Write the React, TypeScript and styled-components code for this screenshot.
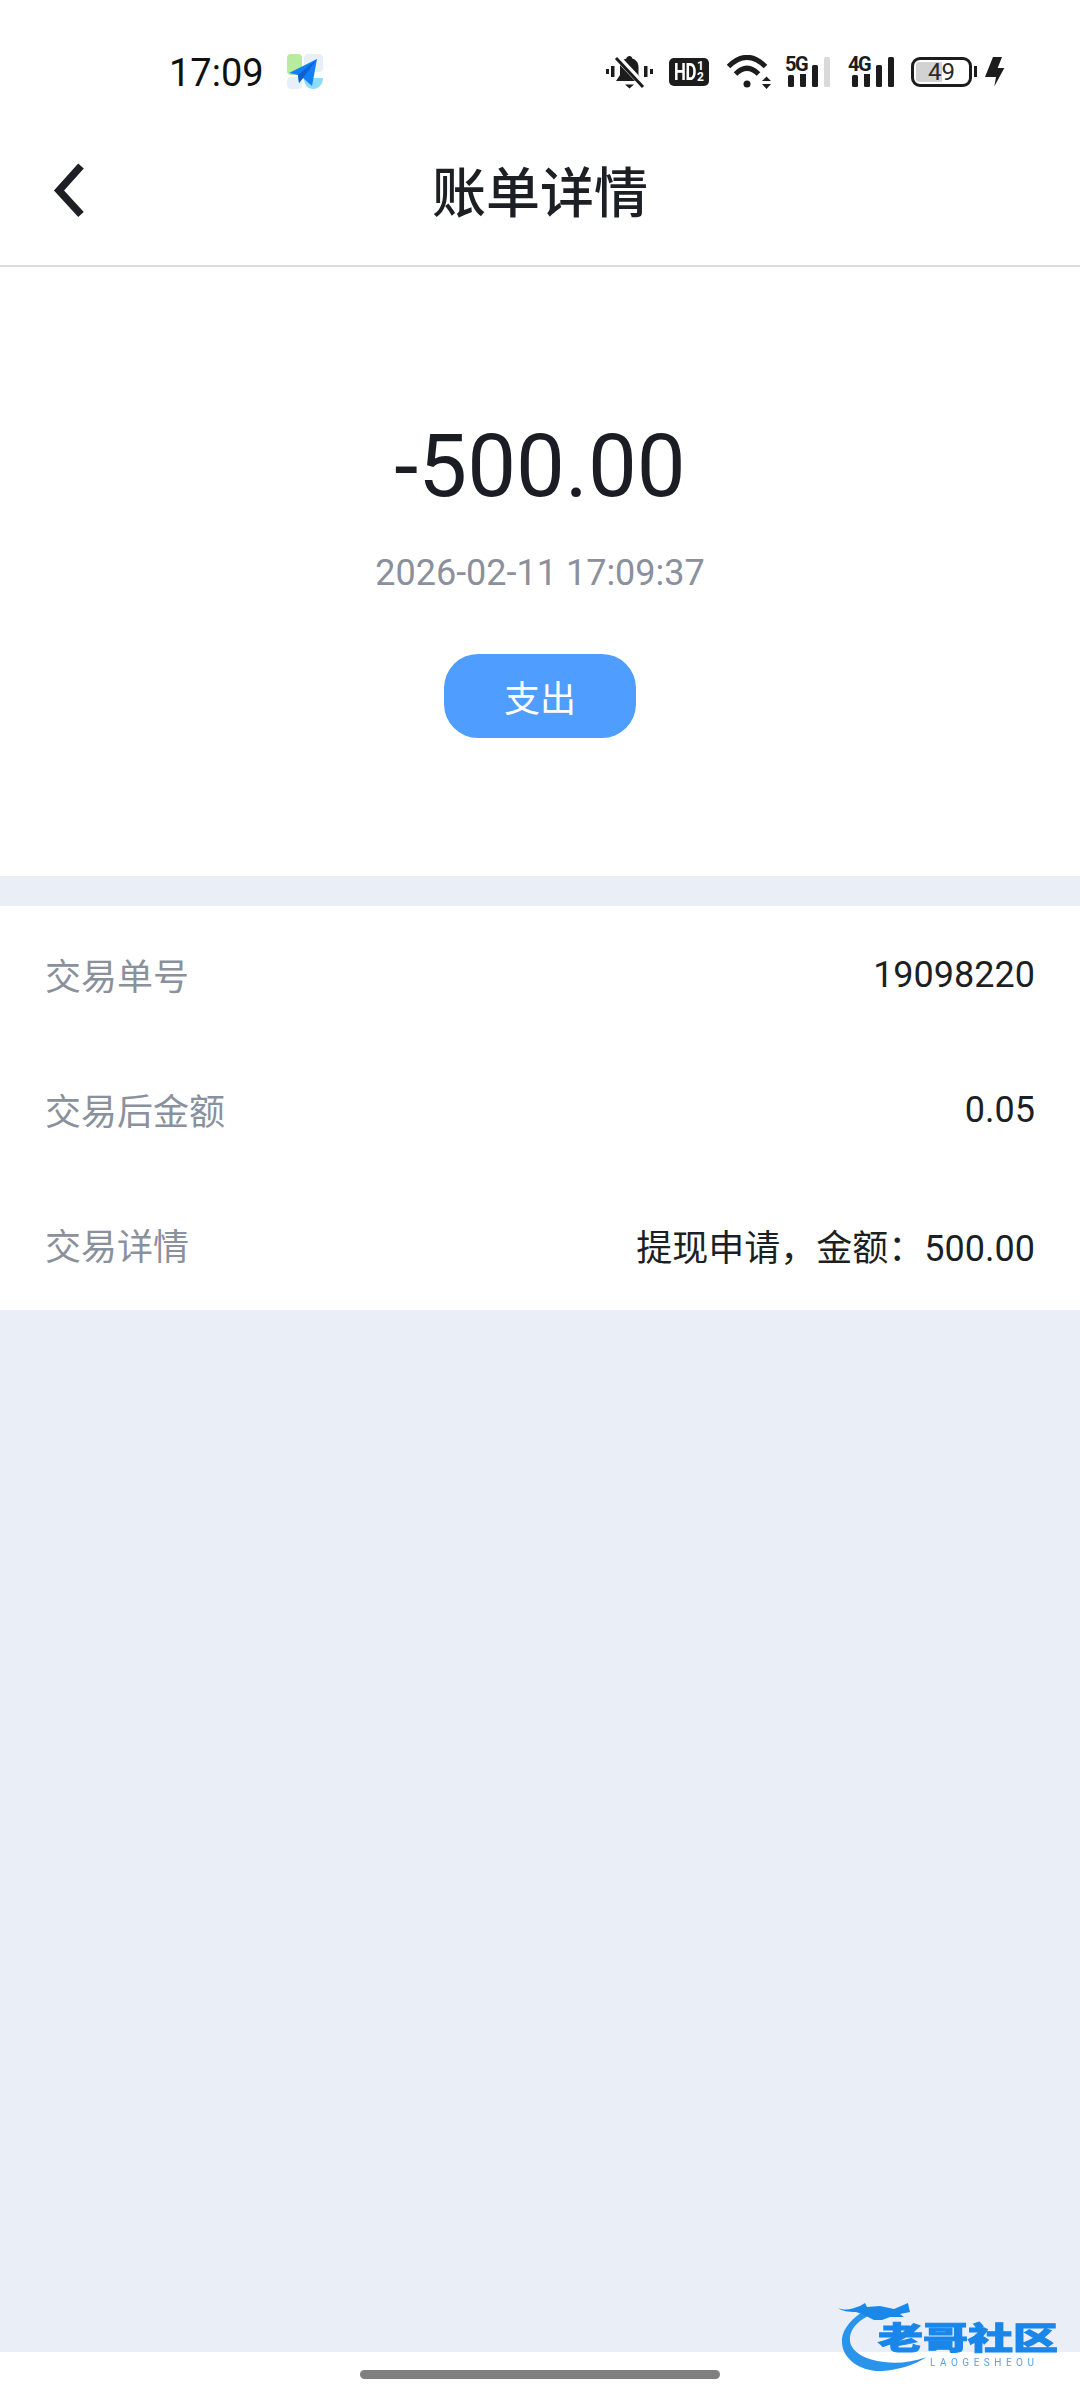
import React from "react";
import styled, { createGlobalStyle } from "styled-components";

const GlobalStyle = createGlobalStyle`
    html, body {
        margin: 0;
        padding: 0;
        background: #ffffff;
    }
    * {
        box-sizing: border-box;
    }
`;

const FONT = `Roboto, "Noto Sans CJK SC", sans-serif`;

const details = [
    { label: "交易单号", value: "19098220" },
    { label: "交易后金额", value: "0.05" },
    { label: "交易详情", value: "提现申请，金额：500.00" },
];

const MuteIcon = () => (
    <svg width="47" height="34" viewBox="0 0 47 34">
        <path d="M0 14h3v5H0zM5 11h3.500v11H5zM38 11h3.500v11H38zM44 14h3v5h-3z" fill="#1c1c1c" />
        <path d="M23.500 1c1.600 0 2.600 1 2.800 2.400 4 1.200 6.200 4.400 6.200 8.600v8l4 6H10l4-6v-8c0-4.200 2.400-7.400 6.400-8.600C20.700 2 21.900 1 23.500 1z" fill="#1c1c1c" />
        <path d="M19 29.500h9l-4.500 4z" fill="#1c1c1c" />
        <path d="M10 1l29 31" stroke="#ffffff" strokeWidth="6.500" />
        <path d="M10 3l27 29" stroke="#1c1c1c" strokeWidth="3" />
    </svg>
);

const WifiIcon = () => (
    <svg width="45" height="34" viewBox="0 0 45 34">
        <path d="M1.500 11.500Q20-7 38.500 11.500" fill="none" stroke="#1c1c1c" strokeWidth="5" />
        <path d="M8.500 19Q20 7.500 31.500 19" fill="none" stroke="#1c1c1c" strokeWidth="5" />
        <circle cx="20" cy="29" r="3.500" fill="#1c1c1c" />
        <path d="M35 26l4.500-4.500 4.500 4.500zM35 29h9l-4.500 5z" fill="#1c1c1c" />
    </svg>
);

const SignalIcon = ({ offset, dim }: { offset: number; dim?: boolean }) => (
    <svg width="46" height="30" viewBox="0 0 46 30">
        <rect x={offset} y="18" width="6" height="12" rx="1.500" fill="#1c1c1c" />
        <rect x={offset + 12} y="15" width="6" height="15" rx="1.500" fill="#1c1c1c" />
        <rect x={offset + 24} y="8" width="6" height="22" rx="1.500" fill="#1c1c1c" />
        <rect x={offset + 36} y="0" width="6" height="30" rx="1.500" fill={dim ? "#d9d9d9" : "#1c1c1c"} />
    </svg>
);

const BoltIcon = () => (
    <svg width="20" height="31" viewBox="0 0 20 31">
        <path d="M8 1h9l-4.300 11h6.600L9.300 30.500 11 21H0z" fill="#1c1c1c" />
    </svg>
);

const AppIcon = () => (
    <svg width="38" height="37" viewBox="0 0 38 37">
        <rect x="1" y="1" width="15" height="21" rx="4" fill="#b9eb9e" />
        <rect x="18" y="1" width="19" height="18" rx="4" fill="#e8eff8" />
        <rect x="1" y="24" width="15" height="12" rx="4" fill="#e8eff8" />
        <path d="M18 25h19c0 6-4 11-10 11-5 0-9-4-9-11z" fill="#8edcfb" />
        <path d="M3 20L31 6l-5 27-9-8-4 5-1-8z" fill="#1080f4" />
        <path d="M12 22L31 6 17 25l-4 5z" fill="#0b62cf" />
    </svg>
);

const BackIcon = () => (
    <svg width="34" height="58" viewBox="0 0 34 58">
        <path d="M31 4L9 28.500l22 24" fill="none" stroke="#1c1f24" strokeWidth="7.500" />
    </svg>
);

const DragonIcon = () => (
    <svg width="100" height="74" viewBox="0 0 100 74">
        <path d="M24 12C10 22 3 32 4 43c1 17 20 29 40 28 16-1 32-6 45-14-15 5-29 7-43 5-18-2-33-10-34-21-1-10 6-19 18-25z" fill="#2a93ea" />
        <path d="M0 8c8 3 14 1 22-2l5-3 2 4 13-1 14 3 14-6 1 5 1 4-10 2 4 3H52l-8 3h-8l-6-3-6-3-6-2C10 12 4 11 0 8z" fill="#1a88ea" />
    </svg>
);

const App = () => {
    return (
        <Page>
            <GlobalStyle />
            <StatusBar>
                <Clock>17:09</Clock>
                <AppIconWrap><AppIcon /></AppIconWrap>
                <StatusIcons>
                    <MuteIcon />
                    <HdBadge>
                        <HdText>HD</HdText>
                        <HdSim><span>1</span><span>2</span></HdSim>
                    </HdBadge>
                    <WifiIcon />
                    <Signal>
                        <SignalLabel>5G</SignalLabel>
                        <SignalIcon offset={3} dim />
                    </Signal>
                    <Signal>
                        <SignalLabel>4G</SignalLabel>
                        <SignalIcon offset={4} />
                    </Signal>
                    <Battery>
                        <BatteryFill />
                        <BatteryText>49</BatteryText>
                    </Battery>
                    <BatteryTip />
                    <BoltIcon />
                </StatusIcons>
            </StatusBar>
            <NavBar>
                <BackButton><BackIcon /></BackButton>
                <NavTitle>账单详情</NavTitle>
            </NavBar>
            <Hero>
                <Amount>-500.00</Amount>
                <DateText>2026-02-11 17:09:37</DateText>
                <TypeTag>支出</TypeTag>
            </Hero>
            <DetailList>
                {details.map(item => (
                    <DetailRow key={item.label}>
                        <DetailLabel>{item.label}</DetailLabel>
                        <DetailValue>{item.value}</DetailValue>
                    </DetailRow>
                ))}
            </DetailList>
            <Filler />
            <HomeArea>
                <HomeHandle />
            </HomeArea>
            <Watermark>
                <DragonIcon />
                <WatermarkName>老哥社区</WatermarkName>
                <WatermarkSub>LAOGESHEOU</WatermarkSub>
            </Watermark>
        </Page>
    );
};

const Page = styled.div`
    position: relative;
    display: flex;
    flex-direction: column;
    width: 1080px;
    height: 2400px;
    overflow: hidden;
    background-color: #e9eef7;
    font-family: ${FONT};
`;
const StatusBar = styled.div`
    display: flex;
    align-items: center;
    height: 143px;
    padding: 0 75px 0 169px;
    background-color: #ffffff;
`;
const Clock = styled.div`
    font-size: 38px;
    color: #111111;
    padding-top: 2px;
`;
const AppIconWrap = styled.div`
    display: flex;
    margin-left: 22px;
`;
const StatusIcons = styled.div`
    display: flex;
    align-items: center;
    margin-left: auto;
`;
const HdBadge = styled.div`
    display: flex;
    align-items: center;
    width: 40px;
    height: 28px;
    margin: 0 18px 0 16px;
    padding-left: 5px;
    border-radius: 5px;
    background-color: #1c1c1c;
    color: #ffffff;
    font-weight: 700;
`;
const HdText = styled.span`
    display: inline-block;
    width: 22px;
    font-size: 24px;
    letter-spacing: -0.5px;
    transform: scaleX(0.7);
    transform-origin: left center;
`;
const HdSim = styled.div`
    display: flex;
    flex-direction: column;
    margin-left: 1px;
    font-size: 12px;
    line-height: 11px;
`;
const Signal = styled.div`
    position: relative;
    display: flex;
    align-items: flex-end;
    width: 46px;
    height: 30px;
    margin-left: 13px;
    & + & {
        margin-left: 17px;
    }
`;
const SignalLabel = styled.span`
    position: absolute;
    top: -3px;
    left: 0;
    font-size: 20px;
    line-height: 20px;
    font-weight: 700;
    letter-spacing: -1.5px;
    color: #1c1c1c;
    background-color: #ffffff;
`;
const Battery = styled.div`
    position: relative;
    display: flex;
    align-items: center;
    justify-content: center;
    width: 61px;
    height: 30px;
    margin-left: 17px;
    border: 3px solid #1c1c1c;
    border-radius: 9px;
    overflow: hidden;
`;
const BatteryFill = styled.div`
    position: absolute;
    top: 2px;
    bottom: 2px;
    left: 2px;
    width: 26px;
    border-radius: 3px 0 0 3px;
    background-color: #d2d2d2;
`;
const BatteryText = styled.span`
    position: relative;
    font-size: 24px;
    color: #2a2a2a;
`;
const BatteryTip = styled.div`
    width: 3px;
    height: 11px;
    margin: 0 8px 0 2px;
    background-color: #1c1c1c;
`;
const NavBar = styled.div`
    position: relative;
    display: flex;
    align-items: center;
    justify-content: center;
    height: 124px;
    border-bottom: 2px solid #dcdcdc;
    background-color: #ffffff;
`;
const BackButton = styled.div`
    position: absolute;
    left: 50px;
    top: 19px;
    display: flex;
`;
const NavTitle = styled.div`
    font-size: 54px;
    font-weight: 500;
    color: #1c1f24;
    padding-bottom: 30px;
`;
const Hero = styled.div`
    display: flex;
    flex-direction: column;
    align-items: center;
    height: 609px;
    padding-top: 148px;
    background-color: #ffffff;
`;
const Amount = styled.div`
    font-size: 87px;
    line-height: 103px;
    color: #1a1d23;
`;
const DateText = styled.div`
    margin-top: 34px;
    font-size: 36px;
    line-height: 42px;
    color: #8a909c;
`;
const TypeTag = styled.div`
    display: flex;
    align-items: center;
    justify-content: center;
    width: 192px;
    height: 84px;
    margin-top: 60px;
    border-radius: 34px;
    background-color: #4f9dff;
    color: #ffffff;
    font-size: 36px;
`;
const DetailList = styled.div`
    height: 404px;
    margin-top: 30px;
    padding: 0 45px;
    background-color: #ffffff;
`;
const DetailRow = styled.div`
    display: flex;
    align-items: center;
    justify-content: space-between;
    height: 135px;
    font-size: 36px;
`;
const DetailLabel = styled.span`
    color: #8a909c;
`;
const DetailValue = styled.span`
    margin-top: 3px;
    color: #1c1f24;
`;
const Filler = styled.div`
    flex: 1;
`;
const HomeArea = styled.div`
    display: flex;
    justify-content: center;
    height: 48px;
    padding-top: 18px;
    background-color: #ffffff;
`;
const HomeHandle = styled.div`
    width: 360px;
    height: 9px;
    border-radius: 5px;
    background-color: #7f7f7f;
`;
const Watermark = styled.div`
    position: absolute;
    left: 838px;
    top: 2300px;
    width: 230px;
    height: 76px;
    filter: blur(0.5px);
`;
const WatermarkName = styled.div`
    position: absolute;
    left: 40px;
    top: 22px;
    font-size: 45px;
    line-height: 33px;
    font-weight: 900;
    white-space: nowrap;
    transform: scaleY(0.68);
    transform-origin: left center;
    color: #1a86ea;
    -webkit-text-stroke: 1.5px #1a86ea;
`;
const WatermarkSub = styled.div`
    position: absolute;
    left: 92px;
    top: 57px;
    font-size: 10px;
    line-height: 11px;
    letter-spacing: 4.5px;
    color: #5da3e3;
    white-space: nowrap;
`;

export default App;
